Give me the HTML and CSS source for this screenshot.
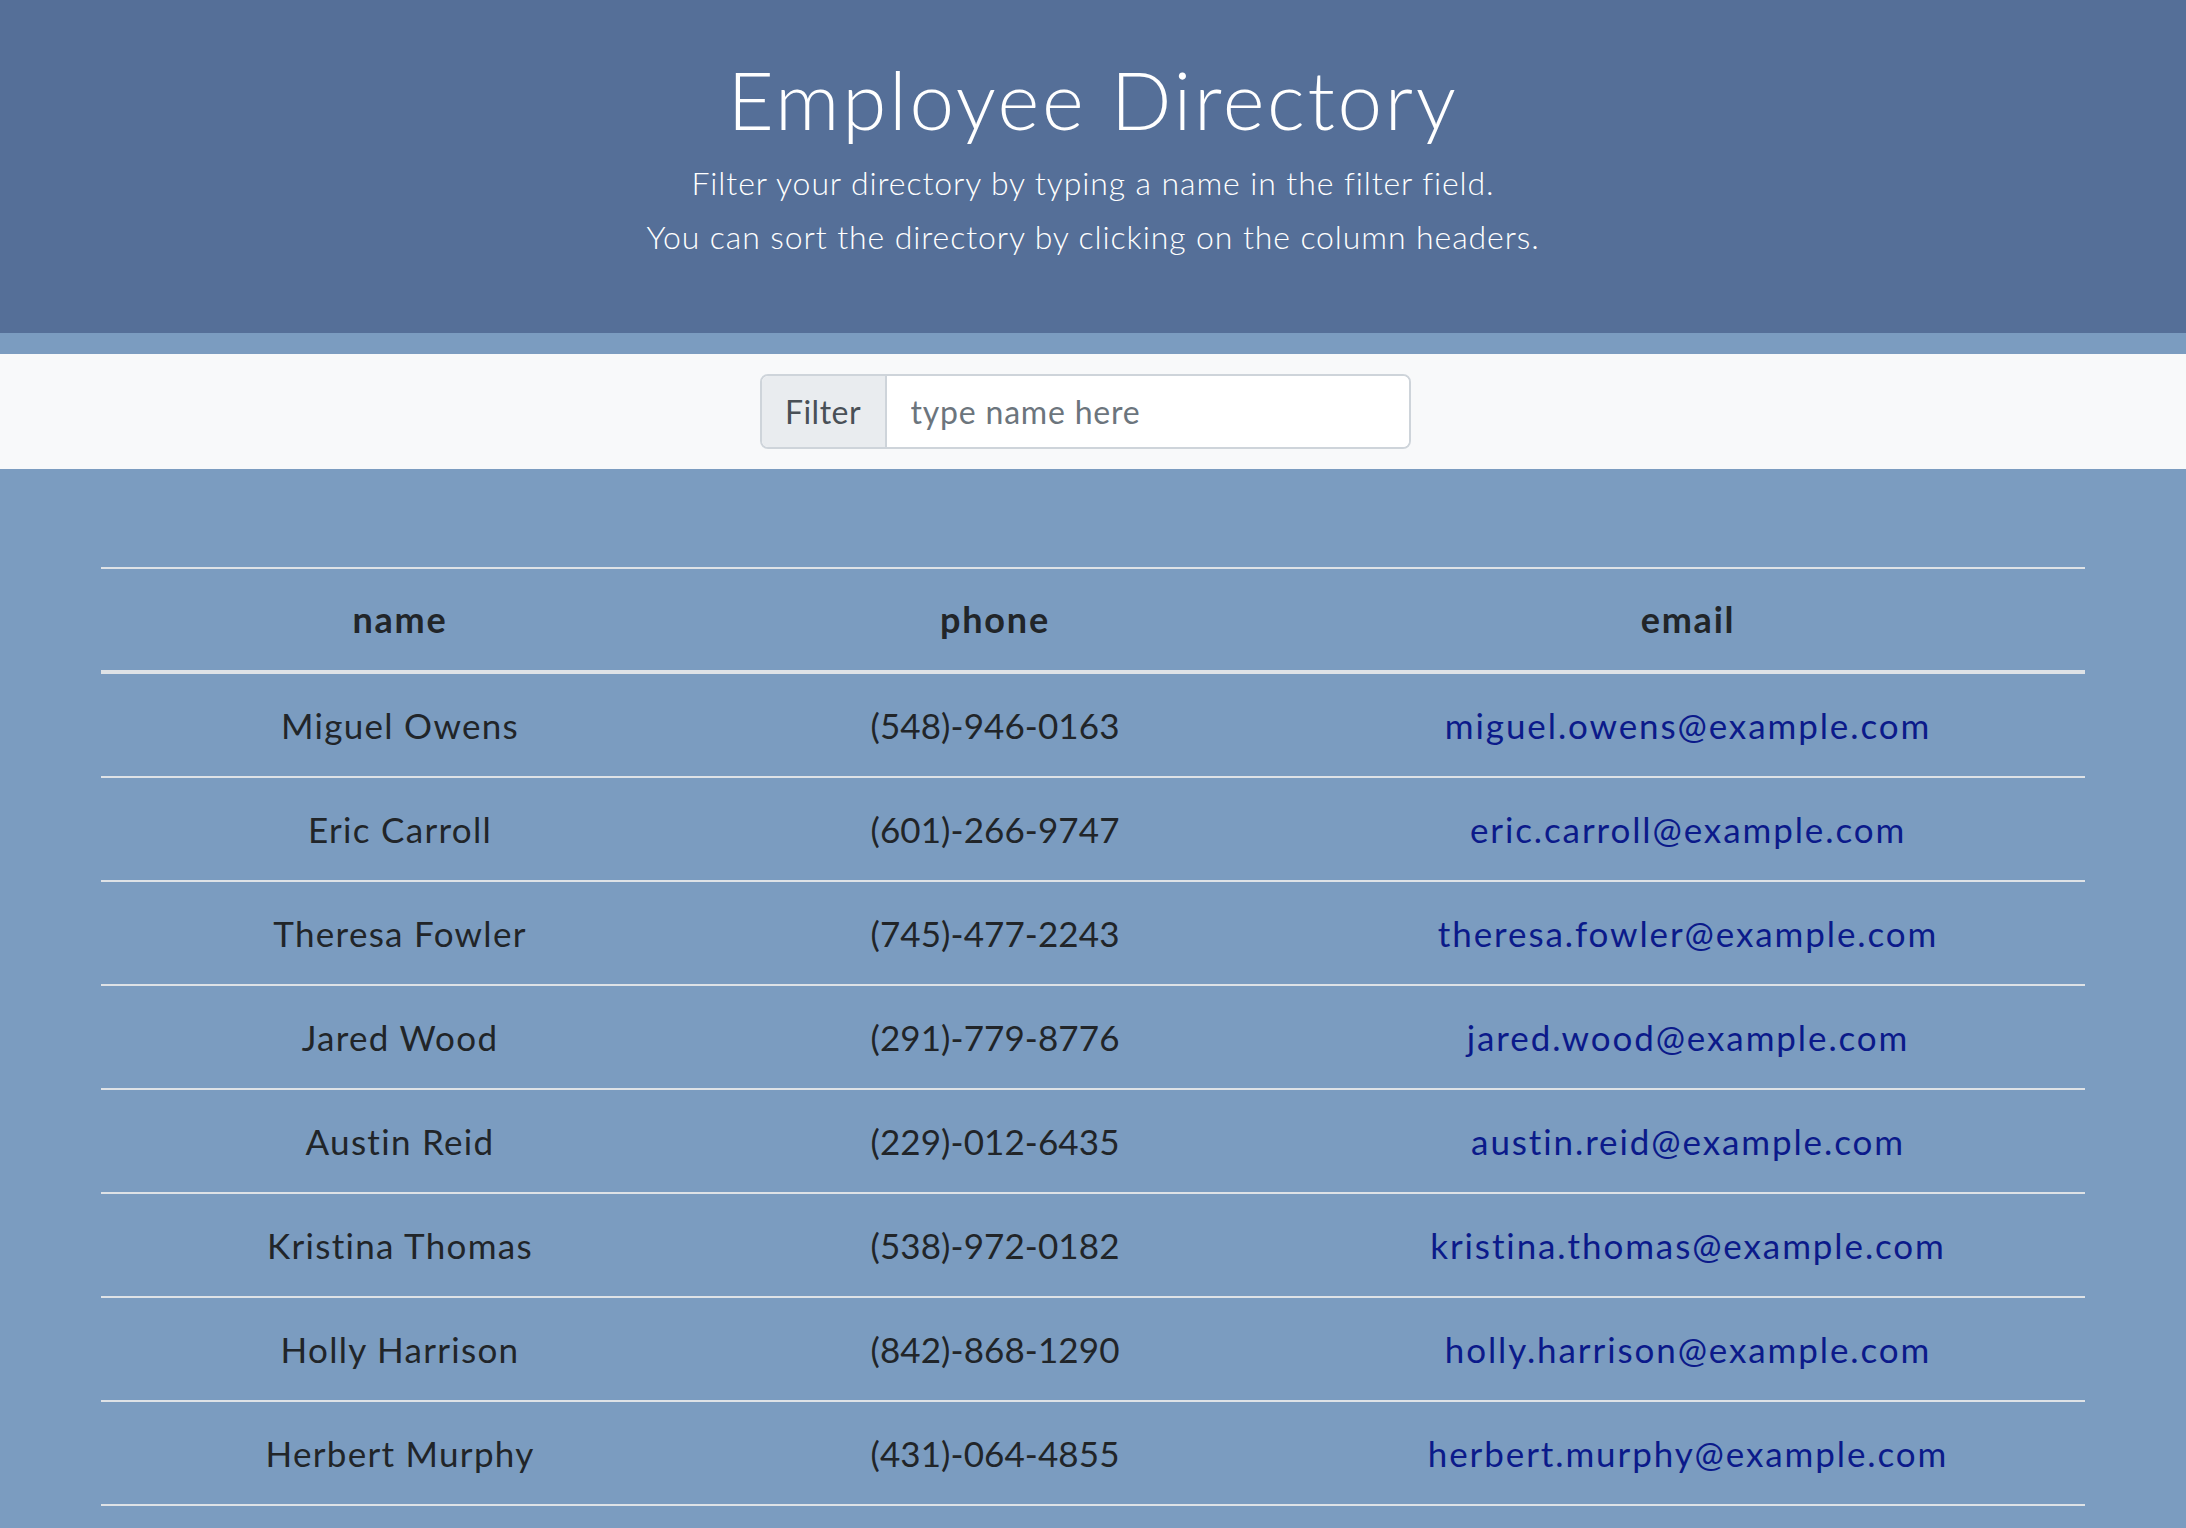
FILE: index.html
```html
<!DOCTYPE html>
<html lang="en">
<head>
<meta charset="utf-8">
<title>Employee Directory</title>
<link rel="stylesheet" href="styles.css">
</head>
<body>
<header class="hero">
  <h1 class="hero-title">Employee Directory</h1>
  <p class="hero-text">Filter your directory by typing a name in the filter field.<br>You can sort the directory by clicking on the column headers.</p>
</header>
<section class="filter-bar">
  <div class="input-group">
    <span class="input-addon">Filter</span>
    <input class="input-field" type="text" placeholder="type name here">
  </div>
</section>
<main class="content">
  <table class="directory">
    <thead>
      <tr><th class="col-name">name</th><th class="col-phone">phone</th><th class="col-email">email</th></tr>
    </thead>
    <tbody>
      <tr><td>Miguel Owens</td><td class="phone">(548)-946-0163</td><td><a href="#">miguel.owens@example.com</a></td></tr>
      <tr><td>Eric Carroll</td><td class="phone">(601)-266-9747</td><td><a href="#">eric.carroll@example.com</a></td></tr>
      <tr><td>Theresa Fowler</td><td class="phone">(745)-477-2243</td><td><a href="#">theresa.fowler@example.com</a></td></tr>
      <tr><td>Jared Wood</td><td class="phone">(291)-779-8776</td><td><a href="#">jared.wood@example.com</a></td></tr>
      <tr><td>Austin Reid</td><td class="phone">(229)-012-6435</td><td><a href="#">austin.reid@example.com</a></td></tr>
      <tr><td>Kristina Thomas</td><td class="phone">(538)-972-0182</td><td><a href="#">kristina.thomas@example.com</a></td></tr>
      <tr><td>Holly Harrison</td><td class="phone">(842)-868-1290</td><td><a href="#">holly.harrison@example.com</a></td></tr>
      <tr><td>Herbert Murphy</td><td class="phone">(431)-064-4855</td><td><a href="#">herbert.murphy@example.com</a></td></tr>
    </tbody>
  </table>
</main>
</body>
</html>
```
FILE: styles.css
```css
html, body {
  margin: 0;
  padding: 0;
}
body {
  background: #7b9cc0;
  font-family: Lato, "Open Sans", sans-serif;
  color: #212529;
  overflow: hidden;
  height: 1528px;
}
.hero {
  background: #556f98;
  height: 333px;
  box-sizing: border-box;
  padding-top: 51px;
  text-align: center;
  color: #ffffff;
}
.hero-title {
  margin: 0;
  font-size: 80px;
  line-height: 96px;
  font-weight: 300;
  letter-spacing: 2.7px;
}
.hero-text {
  margin: 9px 0 0;
  font-size: 32px;
  line-height: 54px;
  font-weight: 300;
  letter-spacing: 0.9px;
}
.filter-bar {
  margin-top: 21px;
  background: #f8f9fa;
  padding: 20px 16px 20px 0;
  display: flex;
  justify-content: center;
}
.input-group {
  display: flex;
  width: 651px;
  height: 75px;
  box-sizing: border-box;
  border: 2px solid #ced4da;
  border-radius: 8px;
  overflow: hidden;
  background: #ffffff;
}
.input-addon {
  width: 125px;
  flex: none;
  box-sizing: border-box;
  background: #e9ecef;
  border-right: 2px solid #ced4da;
  display: flex;
  align-items: center;
  justify-content: center;
  font-size: 32px;
  color: #495057;
  font-weight: 400;
  letter-spacing: 0.5px;
}
.input-field {
  flex: 1;
  border: 0;
  outline: none;
  padding: 0 24px;
  font-family: inherit;
  font-size: 32px;
  color: #495057;
  background: #ffffff;
  letter-spacing: 0.8px;
}
.input-field::placeholder {
  color: #6c757d;
  font-weight: 400;
}
.content {
  padding: 98px 101px 0;
}
.directory {
  width: 100%;
  border-collapse: collapse;
  text-align: center;
  table-layout: fixed;
}
.col-name { width: 598px; }
.col-phone { width: 592px; }
.col-email { width: auto; }
.directory th {
  border-top: 2px solid #dee2e6;
  border-bottom: 4px solid #dee2e6;
  padding: 24px 0;
  line-height: 53px;
  font-size: 36px;
  font-weight: 700;
  letter-spacing: 1.8px;
}
.directory td {
  border-bottom: 2px solid #dee2e6;
  padding: 24px 0;
  line-height: 54px;
  font-size: 35px;
  font-weight: 400;
  letter-spacing: 1.3px;
}
.directory td.phone {
  letter-spacing: 0.1px;
}
.directory a {
  color: #0b1a8a;
  text-decoration: none;
  letter-spacing: 1.9px;
}
```
